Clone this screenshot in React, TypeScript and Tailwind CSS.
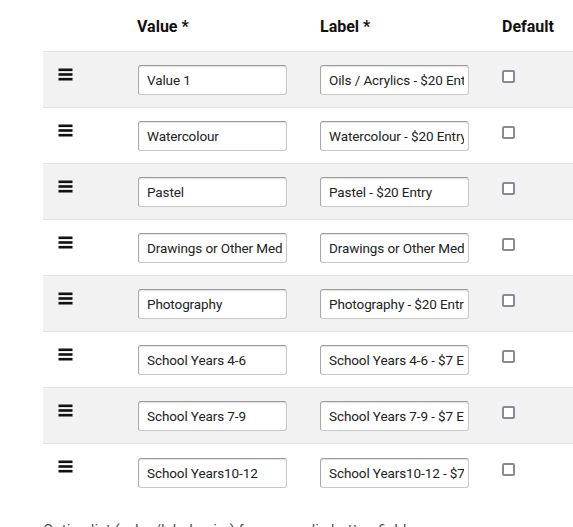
import React from "react";

const rows: [string, string][] = [
  ["Value 1", "Oils / Acrylics - $20 Entry"],
  ["Watercolour", "Watercolour - $20 Entry"],
  ["Pastel", "Pastel - $20 Entry"],
  ["Drawings or Other Media", "Drawings or Other Media - $20 Entry"],
  ["Photography", "Photography - $20 Entry"],
  ["School Years 4-6", "School Years 4-6 - $7 Entry"],
  ["School Years 7-9", "School Years 7-9 - $7 Entry"],
  ["School Years10-12", "School Years10-12 - $7 Entry"],
];

function Bars() {
  return (
    <svg width="15" height="13" viewBox="0 0 15 13" className="block">
      <rect x="0.5" y="0.5" width="14" height="2.6" fill="#111" />
      <rect x="0.5" y="5.2" width="14" height="2.6" fill="#111" />
      <rect x="0.5" y="9.9" width="14" height="2.6" fill="#111" />
    </svg>
  );
}

function Field({ value }: { value: string }) {
  return (
    <input
      readOnly
      value={value}
      className="w-[149px] h-[30px] rounded-[3px] border border-[#c8c8c8] border-t-[#9a9a9a] border-l-[#a8a8a8] bg-white pl-[8px] pr-[4px] text-[13.5px] tracking-[-0.1px] text-[#222] outline-none shadow-[inset_0_1px_1px_rgba(0,0,0,0.12)]"
      style={{ fontFamily: "Roboto, 'Liberation Sans', sans-serif" }}
    />
  );
}

export default function App() {
  return (
    <div
      className="w-[573px] h-[527px] overflow-hidden bg-white pt-[1px]"
      style={{ fontFamily: "Roboto, 'Liberation Sans', sans-serif" }}
    >
      <div className="ml-[43px]">
        <div className="grid grid-cols-[94px_183px_182px_1fr] h-[51px] items-center border-b border-[#e2e2e2] text-[16px] font-bold text-[#111]">
          <div />
          <div className="pt-[1px]">Value *</div>
          <div className="pt-[1px]">Label *</div>
          <div className="pt-[1px]">Default</div>
        </div>
        {rows.map(([v, l], i) => (
          <div
            key={i}
            className={`grid grid-cols-[94px_183px_182px_1fr] h-[56px] items-center ${
              i < rows.length - 1 ? "border-b border-[#e2e2e2]" : ""
            } ${i % 2 === 0 ? "bg-[#f2f2f2]" : "bg-white"}`}
          >
            <div className="pl-[15px] pb-[11px]">
              <Bars />
            </div>
            <div className="pl-[1px] pt-[1px]">
              <Field value={v} />
            </div>
            <div className="pt-[1px]">
              <Field value={l} />
            </div>
            <div className="pb-[6px]">
              <div className="w-[13px] h-[13px] rounded-[2px] border-2 border-[#8a8a96] bg-white" />
            </div>
          </div>
        ))}
        <div className="pt-[19px] text-[15px] text-[#555]">
          Option list (value/label pairs) for your radio button field.
        </div>
      </div>
    </div>
  );
}
